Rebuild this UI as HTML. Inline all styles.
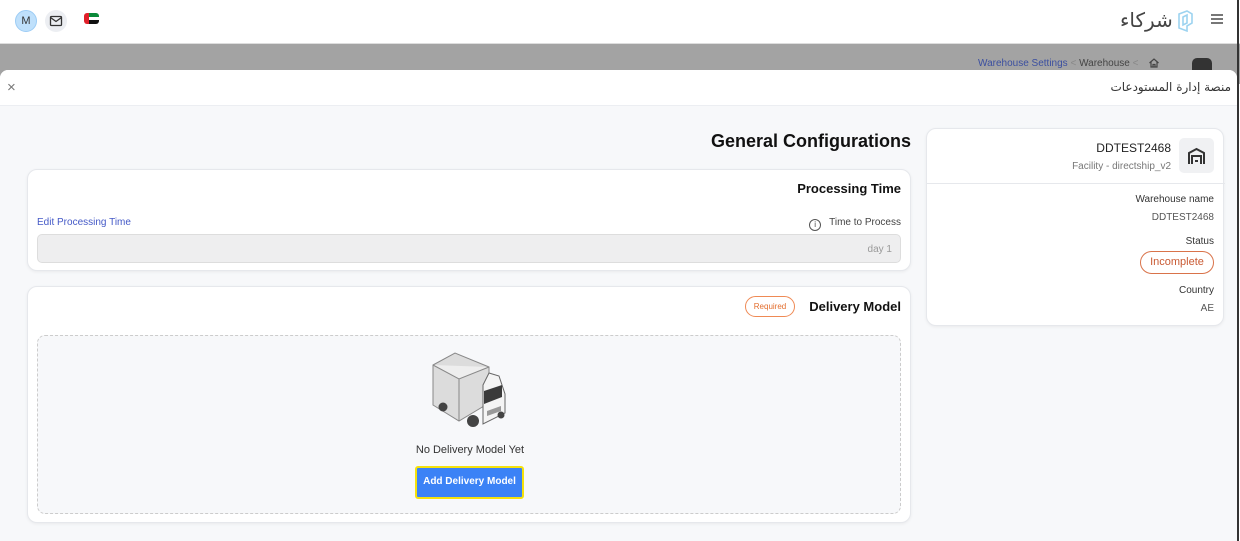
<!DOCTYPE html>
<html><head><meta charset="utf-8"><style>
*{box-sizing:border-box;margin:0;padding:0}
body{width:1240px;height:541px;overflow:hidden;font-family:"Liberation Sans","Noto Sans CJK SC",sans-serif;background:#fff;position:relative;color:#222}
.top{position:absolute;left:0;top:0;width:1240px;height:44px;background:#fff;border-bottom:1px solid #ddd}
.gray{position:absolute;left:0;top:44px;width:1240px;height:40px;background:#a3a3a3}
.modal{position:absolute;left:0;top:70px;width:1237px;height:471px;background:#f7f8fa;border-radius:8px 8px 0 0;overflow:hidden}
.mh{height:36px;background:#fff;border-bottom:1px solid #eceef2;position:relative}
.card{position:absolute;background:#fff;border:1px solid #e6e8ec;border-radius:10px;box-shadow:0 1px 3px rgba(0,0,0,.06)}
.abs{position:absolute}
.r{text-align:right}
</style></head><body>
<div class="top">
 <div class="abs" style="left:15px;top:10px;width:22px;height:22px;border-radius:50%;background:#bfe0fb;border:1px solid #9cccf5;font-size:11px;text-align:center;line-height:20px;color:#333">M</div>
 <div class="abs" style="left:45px;top:10px;width:22px;height:22px;border-radius:50%;background:#eceef2"><svg width="22" height="22" viewBox="0 0 22 22"><rect x="5.5" y="6.5" width="11" height="9" rx="1" fill="none" stroke="#333" stroke-width="1.3"/><path d="M5.5 7.5l5.5 4 5.5-4" fill="none" stroke="#333" stroke-width="1.3"/></svg></div>
 <div class="abs" style="left:84px;top:13px;width:15px;height:11px;border-radius:3px;overflow:hidden;display:flex"><div style="width:5px;background:#e0202a"></div><div style="flex:1;display:flex;flex-direction:column"><div style="flex:1;background:#0a8a3a"></div><div style="flex:1;background:#fff"></div><div style="flex:1;background:#111"></div></div></div>
 <div class="abs" style="left:1120px;top:8px;font-size:20px;color:#444;font-family:'DejaVu Sans',sans-serif">شركاء</div>
 <svg class="abs" style="left:1176px;top:10px" width="18" height="22" viewBox="0 0 18 22"><path d="M3 4l8-3 5 3v9l-5 3v5l-8-3z M7 7l4-2v8l-4 2z" fill="none" stroke="#9dd3f0" stroke-width="1.6"/></svg>
 <div class="abs" style="left:1211px;top:14px;width:12px;height:1.5px;background:#777;box-shadow:0 4px 0 #777,0 8px 0 #777"></div>
</div>
<div class="gray">
 <div class="abs" style="left:978px;top:14px;font-size:10px;color:#3b4fa0">Warehouse Settings <span style="color:#888">&lt;</span> <span style="color:#444">Warehouse</span> <span style="color:#888">&lt;</span></div>
 <svg class="abs" style="left:1148px;top:13px" width="12" height="12" viewBox="0 0 12 12"><path d="M1.5 6L6 2l4.5 4M3 5v5h6V5M5 10V7.5h2V10" fill="none" stroke="#444" stroke-width="1.2"/></svg>
 <div class="abs" style="left:1192px;top:14px;width:20px;height:14px;background:#333;border-radius:5px 5px 0 0"></div>
</div>
<div class="modal">
 <div class="mh">
  <div class="abs" style="left:7px;top:9px;font-size:15px;color:#777">×</div>
  <div class="abs" style="right:6px;top:10px;font-size:12px;color:#333;font-family:'DejaVu Sans',sans-serif">منصة إدارة المستودعات</div>
 </div>
 <div class="abs r" style="right:326px;top:61px;font-size:18px;font-weight:bold;color:#111">General Configurations</div>
 <div class="card" style="left:27px;top:99px;width:884px;height:102px">
  <div class="abs" style="right:9px;top:11px;font-size:13px;font-weight:bold;color:#111">Processing Time</div>
  <div class="abs" style="left:9px;top:47px;font-size:10px;color:#4459c7">Edit Processing Time</div>
  <div class="abs" style="right:9px;top:47px;font-size:10px;color:#444"><span style="display:inline-block;width:12px;height:12px;border:1.2px solid #555;border-radius:50%;font-size:8px;text-align:center;line-height:10px;margin-right:8px;vertical-align:-2px">i</span>Time to Process</div>
  <div class="abs" style="left:9px;top:64px;width:864px;height:29px;background:#eeeeef;border:1px solid #ddd;border-radius:5px;font-size:10px;color:#999;text-align:right;padding:9px 8px 0 0">day 1</div>
 </div>
 <div class="card" style="left:27px;top:216px;width:884px;height:237px">
  <div class="abs" style="right:9px;top:12px;font-size:13px;font-weight:bold;color:#111">Delivery Model</div>
  <div class="abs" style="right:115px;top:9px;width:50px;height:21px;border:1.3px solid #ef8a55;border-radius:11px;font-size:8px;color:#e36e2e;text-align:center;line-height:19px">Required</div>
  <div class="abs" style="left:9px;top:48px;width:864px;height:179px;border:1px dashed #ccc;border-radius:8px;background:#f7f8fa">
   <svg class="abs" style="left:393px;top:15px" width="80" height="80" viewBox="0 0 80 80">
    <path d="M2 14L24 2l34 14v36L28 70 2 54z" fill="#dcdcdc" stroke="#888"/>
    <path d="M2 14l26 14 30-12" fill="#eee" stroke="#888"/>
    <path d="M28 28v42" stroke="#888"/>
    <path d="M58 22l10 3 6 18v19l-22 11V34z" fill="#f4f4f4" stroke="#666"/>
    <path d="M53 40l18-6v12l-18 7z" fill="#3a3a3a"/>
    <path d="M56 60l14-5v5l-14 5z" fill="#999"/>
    <circle cx="12" cy="56" r="4.5" fill="#444"/><circle cx="42" cy="70" r="6" fill="#444"/><circle cx="70" cy="64" r="3.5" fill="#444"/>
   </svg>
   <div class="abs" style="left:0;width:864px;top:108px;text-align:center;font-size:11px;color:#333">No Delivery Model Yet</div>
   <div class="abs" style="left:377px;top:130px;width:109px;height:33px;border:2.5px solid #f5e20b;background:#3b82f6;border-radius:3px;font-size:10px;font-weight:bold;color:#fff;text-align:center;line-height:28px">Add Delivery Model</div>
  </div>
 </div>
 <div class="card" style="left:926px;top:58px;width:298px;height:198px">
  <div class="abs" style="right:52px;top:12px;font-size:12px;color:#222">DDTEST2468</div>
  <div class="abs" style="right:52px;top:32px;font-size:10px;color:#777">Facility - directship_v2</div>
  <div class="abs" style="right:9px;top:9px;width:35px;height:35px;background:#f0f1f3;border-radius:5px"><svg width="35" height="35" viewBox="0 0 35 35"><path d="M10 26V15l7.5-4 7.5 4v11 M13 26v-8h9v8 M16 23h3" fill="none" stroke="#333" stroke-width="2"/></svg></div>
  <div class="abs" style="left:0;top:54px;width:298px;height:1px;background:#e6e8ec"></div>
  <div class="abs r" style="right:9px;top:65px;font-size:10px;color:#333">Warehouse name</div>
  <div class="abs r" style="right:9px;top:83px;font-size:10px;color:#555">DDTEST2468</div>
  <div class="abs r" style="right:9px;top:107px;font-size:10px;color:#333">Status</div>
  <div class="abs" style="right:9px;top:122px;width:74px;height:23px;border:1.3px solid #d9734a;border-radius:12px;font-size:11px;color:#c95a33;text-align:center;line-height:21px">Incomplete</div>
  <div class="abs r" style="right:9px;top:156px;font-size:10px;color:#333">Country</div>
  <div class="abs r" style="right:9px;top:174px;font-size:10px;color:#555">AE</div>
 </div>
</div>
<div class="abs" style="left:1237px;top:0;width:2px;height:541px;background:#333"></div>
</body></html>
